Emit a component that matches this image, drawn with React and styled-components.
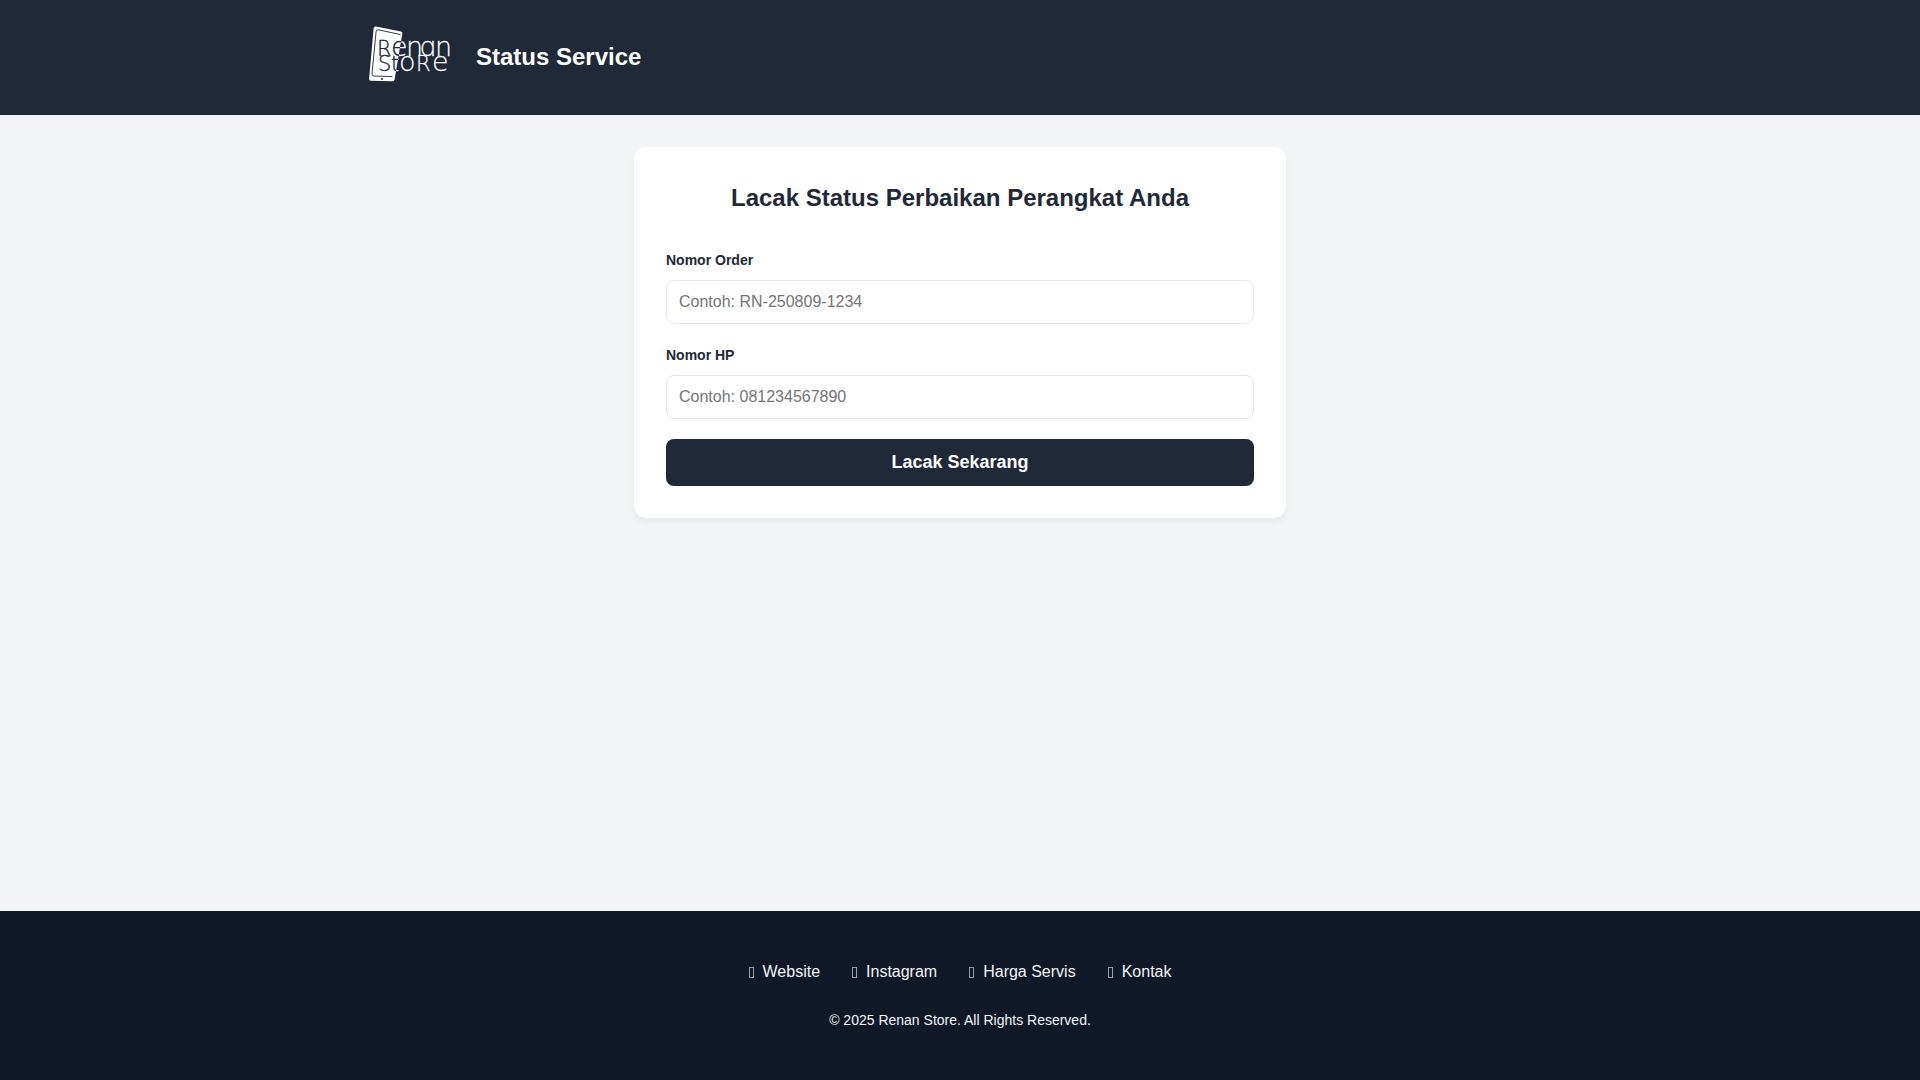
import React from 'react';
import styled, { createGlobalStyle } from 'styled-components';

const links = ['Website', 'Instagram', 'Harga Servis', 'Kontak'];

function Logo() {
  return (
    <LogoSvg viewBox="0 0 100 67" role="img" aria-label="Renan Store">
      <defs>
        {/* dark on the phone, white past its right edge */}
        <linearGradient
          id="ink"
          gradientUnits="userSpaceOnUse"
          x1="38"
          y1="32.5"
          x2="39"
          y2="32.7"
        >
          <stop offset="0.4" stopColor="#1f2937" />
          <stop offset="0.6" stopColor="#fff" />
        </linearGradient>
      </defs>
      <path
        d="M16 2.6 L40.8 7.6 Q42.6 8 42.3 9.8 L34.6 55.4 Q34.2 57.3 32.4 57.3 L10.8 56.8 Q9 56.7 9.1 54.8 L13.6 4.4 Q13.9 2.3 16 2.6 Z"
        fill="#fff"
      />
      <path
        d="M40.6 10.6 L18.4 5.8 Q16.3 5.4 16.1 7.5 L12 50 Q11.8 52 13.8 52 L32.4 52.6"
        fill="none"
        stroke="#1f2937"
        strokeWidth="0.9"
      />
      <circle cx="22" cy="54.9" r="1" fill="#1f2937" />
      <text y="32">
        <tspan className="small" x="17">R</tspan>
        <tspan x="31 46">en</tspan>
        <tspan className="round" x="60">a</tspan>
        <tspan x="75">n</tspan>
      </text>
      <text y="47">
        <tspan className="small" x="18 31">St</tspan>
        <tspan x="39">o</tspan>
        <tspan className="small" x="56">R</tspan>
        <tspan x="72">e</tspan>
      </text>
    </LogoSvg>
  );
}

function App() {
  return (
    <Page>
      <GlobalStyle />
      <Header>
        <HeaderInner>
          <Logo />
          <h1>Status Service</h1>
        </HeaderInner>
      </Header>
      <Main>
        <Card>
          <h2>Lacak Status Perbaikan Perangkat Anda</h2>
          <form onSubmit={(e) => e.preventDefault()}>
            <Field>
              <label htmlFor="order">Nomor Order</label>
              <input id="order" type="text" placeholder="Contoh: RN-250809-1234" />
            </Field>
            <Field>
              <label htmlFor="phone">Nomor HP</label>
              <input id="phone" type="tel" placeholder="Contoh: 081234567890" />
            </Field>
            <SubmitButton type="submit">Lacak Sekarang</SubmitButton>
          </form>
        </Card>
      </Main>
      <Footer>
        <FooterLinks>
          {links.map((label) => (
            <a href="#" key={label}>
              <LinkIcon aria-hidden="true" />
              {label}
            </a>
          ))}
        </FooterLinks>
        <p>© 2025 Renan Store. All Rights Reserved.</p>
      </Footer>
    </Page>
  );
}

const GlobalStyle = createGlobalStyle`
  * {
    margin: 0;
    padding: 0;
    box-sizing: border-box;
  }
  body {
    background-color: #f3f4f6;
    color: #1f2937;
    font-family: 'Liberation Sans', Arial, sans-serif;
    font-size: 16px;
    line-height: 26px;
  }
`;

const Page = styled.div`
  display: flex;
  flex-direction: column;
  min-height: 100vh;
`;

const Header = styled.header`
  background-color: #1f2937;
  color: white;
  padding: 24px;
`;

const HeaderInner = styled.div`
  display: flex;
  align-items: center;
  gap: 16px;
  max-width: 1200px;
  margin: 0 auto;
  h1 {
    font-size: 24px;
    font-weight: 700;
    line-height: 38px;
    padding-bottom: 2px;
  }
`;

const LogoSvg = styled.svg`
  display: block;
  width: 100px;
  height: 67px;
  font-family: 'DejaVu Sans', sans-serif;
  font-weight: 200;
  font-size: 27px;
  text {
    fill: url(#ink);
    stroke: url(#ink);
    stroke-width: 0.3;
  }
  .small {
    font-size: 21px;
  }
  /* single-storey a */
  .round {
    font-family: Inter, sans-serif;
    font-feature-settings: 'cv11';
  }
`;

const Main = styled.main`
  flex: 1;
  width: 100%;
  max-width: 700px;
  margin: 0 auto;
  padding: 32px 24px;
`;

const Card = styled.section`
  background-color: white;
  border-radius: 12px;
  box-shadow: 0 4px 6px rgba(0, 0, 0, 0.05);
  padding: 32px;
  h2 {
    font-size: 24px;
    font-weight: 700;
    line-height: 38px;
    text-align: center;
    margin-bottom: 32px;
  }
`;

const Field = styled.div`
  margin-bottom: 20px;
  label {
    display: block;
    font-size: 14px;
    font-weight: 700;
    line-height: 23px;
    margin-bottom: 8px;
  }
  input {
    display: block;
    width: 100%;
    height: 44px;
    padding: 0 12px;
    border: 1px solid #e5e7eb;
    border-radius: 8px;
    background-color: white;
    color: inherit;
    font-family: inherit;
    font-size: 16px;
  }
  input::placeholder {
    color: #757575;
  }
`;

const SubmitButton = styled.button`
  display: block;
  width: 100%;
  padding: 12px;
  border: none;
  border-radius: 8px;
  background-color: #1f2937;
  color: white;
  font-family: inherit;
  font-size: 18px;
  font-weight: 700;
  line-height: 23px;
  cursor: pointer;
`;

const Footer = styled.footer`
  background-color: #111827;
  color: #f3f4f6;
  padding: 48px 24px;
  text-align: center;
  p {
    font-size: 14px;
    line-height: 23px;
  }
`;

const FooterLinks = styled.nav`
  display: flex;
  flex-wrap: wrap;
  justify-content: center;
  gap: 32px;
  margin-bottom: 24px;
  a {
    display: flex;
    align-items: center;
    gap: 9px;
    color: inherit;
    text-decoration: none;
  }
`;

const LinkIcon = styled.i`
  width: 5px;
  height: 11px;
  border: 1px solid #9a9da5;
`;

export default App;
